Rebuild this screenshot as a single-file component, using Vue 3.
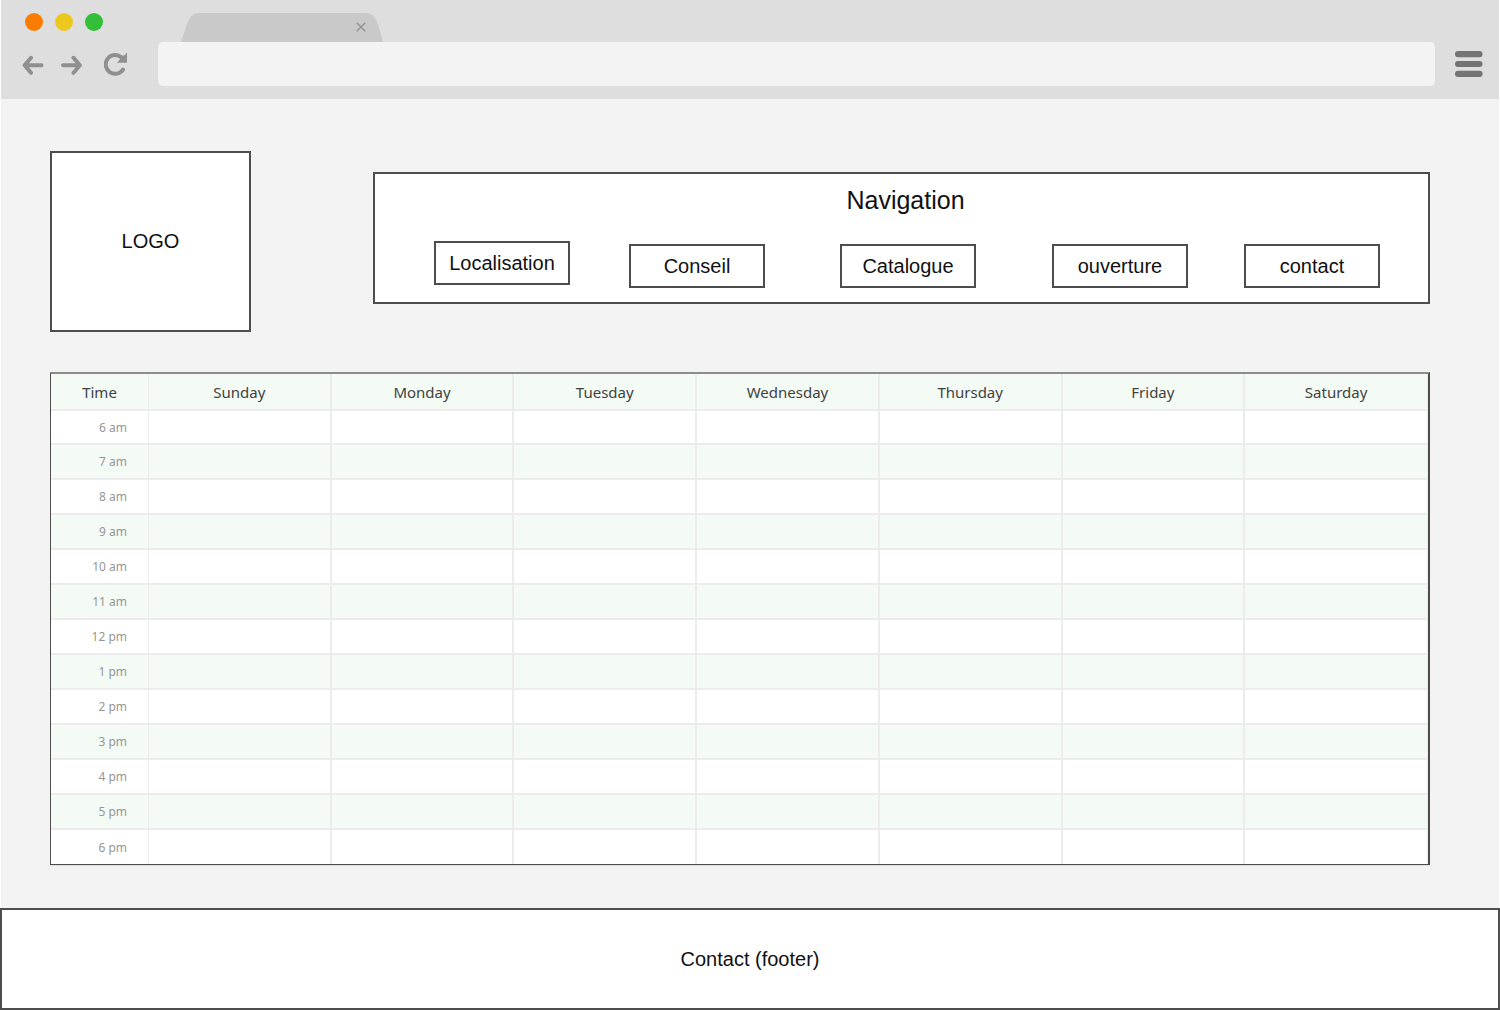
<script setup>
const links = ['Localisation', 'Conseil', 'Catalogue', 'ouverture', 'contact']
const days = ['Sunday', 'Monday', 'Tuesday', 'Wednesday', 'Thursday', 'Friday', 'Saturday']
const hours = [
  '6 am', '7 am', '8 am', '9 am', '10 am', '11 am', '12 pm',
  '1 pm', '2 pm', '3 pm', '4 pm', '5 pm', '6 pm',
]
</script>

<template>
  <div class="window">
    <div class="chrome">
      <div class="tabs">
        <div class="lights">
          <button class="light orange" type="button" aria-label="Close window"></button>
          <button class="light yellow" type="button" aria-label="Minimise window"></button>
          <button class="light green" type="button" aria-label="Maximise window"></button>
        </div>
        <div class="tab">
          <svg class="tab-shape" viewBox="0 0 202 29" preserveAspectRatio="none" aria-hidden="true">
            <path d="M0 29 L6 11 Q10 0 17 0 H185 Q193 0 197 11 L202 29 Z" fill="#c9c9c9" />
          </svg>
          <button class="icon tab-close" type="button" aria-label="Close tab">
            <svg width="10" height="10" viewBox="0 0 10 10">
              <path d="M0.7 0.7 L9.3 9.3 M9.3 0.7 L0.7 9.3" stroke="#949494" stroke-width="1.5" />
            </svg>
          </button>
        </div>
      </div>

      <div class="toolbar">
        <div class="history">
          <button class="icon" type="button" aria-label="Back">
            <svg width="22" height="22" viewBox="0 0 22 22" fill="none" stroke="#8f8f8f" stroke-width="4" stroke-linecap="round" stroke-linejoin="round">
              <path d="M19.5 12.3 H3.5 M9 4.8 L2.6 12.3 L9 19.8" />
            </svg>
          </button>
          <button class="icon" type="button" aria-label="Forward">
            <svg width="22" height="22" viewBox="0 0 22 22" fill="none" stroke="#8f8f8f" stroke-width="4" stroke-linecap="round" stroke-linejoin="round">
              <path d="M2 12.3 H18 M12.5 4.8 L18.9 12.3 L12.5 19.8" />
            </svg>
          </button>
        </div>
        <button class="icon" type="button" aria-label="Reload">
          <svg width="24" height="26" viewBox="0 0 24 26">
            <path d="M17.2 6.2 A9.4 9.4 0 1 0 19 18.6" fill="none" stroke="#8f8f8f" stroke-width="4" stroke-linecap="round" />
            <path d="M23 1.4 V11.8 H13 L16 8.2 L17.6 4.6 L20.3 4.4 Z" fill="#8f8f8f" />
          </svg>
        </button>
        <input class="address" type="text" aria-label="Address" />
        <button class="icon" type="button" aria-label="Menu">
          <svg width="28" height="26" viewBox="0 0 28 26" fill="#737373">
            <rect x="0" y="0" width="27.5" height="6.2" rx="3" />
            <rect x="0" y="9.9" width="27.5" height="6.2" rx="3" />
            <rect x="0" y="19.8" width="27.5" height="6.2" rx="3" />
          </svg>
        </button>
      </div>
    </div>

    <main class="page">
      <header class="top">
        <div class="logo">LOGO</div>
        <nav class="navigation" aria-labelledby="nav-title">
          <h2 id="nav-title">Navigation</h2>
          <div class="links">
            <a v-for="link in links" :key="link" href="#">{{ link }}</a>
          </div>
        </nav>
      </header>

      <table class="schedule">
        <thead>
          <tr>
            <th class="time" scope="col">Time</th>
            <th v-for="day in days" :key="day" scope="col">{{ day }}</th>
          </tr>
        </thead>
        <tbody>
          <tr v-for="hour in hours" :key="hour">
            <th scope="row">{{ hour }}</th>
            <td v-for="day in days" :key="day"></td>
          </tr>
        </tbody>
      </table>
    </main>

    <footer class="footer">Contact (footer)</footer>
  </div>
</template>

<style>
body {
  margin: 0;
  background: #fff;
}
</style>

<style scoped>
* {
  box-sizing: border-box;
}

.window {
  display: flex;
  flex-direction: column;
  min-height: 100vh;
  font-family: "Liberation Sans", Arial, sans-serif;
  font-size: 20px;
  color: #111;
}

button {
  border: 0;
  padding: 0;
}

svg {
  display: block;
}

.chrome {
  margin: 0 1px;
  padding-bottom: 13px;
  background: #dedede;
}

.tabs {
  display: flex;
  gap: 78px;
  height: 42px;
  padding: 13px 0 0 24px;
}

.lights {
  display: flex;
  gap: 12px;
}

.light {
  width: 18px;
  height: 18px;
  border-radius: 50%;
}

.orange { background: #fa7d00; }
.yellow { background: #ecc81f; }
.green { background: #33bf38; }

.tab {
  position: relative;
  display: flex;
  justify-content: flex-end;
  align-items: center;
  width: 202px;
  padding: 0 17px 2px 0;
}

.tab-shape {
  position: absolute;
  inset: 0;
  width: 100%;
  height: 100%;
}

.icon {
  flex: none;
  background: none;
}

.tab-close {
  position: relative;
}

.toolbar {
  display: flex;
  align-items: center;
  padding: 0 16px 0 21px;
}

.history {
  display: flex;
  gap: 17px;
  margin-right: 21px;
}

.address {
  flex: 1;
  min-width: 0;
  height: 44px;
  margin: 0 20px 0 30px;
  padding: 0 12px;
  border: 0;
  border-radius: 5px;
  background: #f3f3f3;
  font: inherit;
}

.page {
  flex: 1;
  margin: 0 1px;
  padding: 52px 69px 43px 49px;
  background: #f3f3f3;
}

.top {
  display: flex;
  align-items: center;
  gap: 122px;
  margin-bottom: 40px;
}

.logo,
.navigation,
.links a,
.footer {
  border: 2px solid #4d4d4d;
  background: #fff;
}

.logo {
  display: flex;
  flex: none;
  align-items: center;
  justify-content: center;
  width: 201px;
  height: 181px;
}

.navigation {
  flex: 1;
  height: 132px;
  margin-bottom: 7px;
}

.navigation h2 {
  margin: 0;
  padding: 11px 0 0 8px;
  font-size: 25px;
  font-weight: 400;
  line-height: 30px;
  text-align: center;
}

.links {
  display: grid;
  grid-template-columns: 195fr 211fr 212fr 192fr 136px;
  align-items: end;
  height: 47px;
  margin-top: 26px;
  padding: 0 48px 0 59px;
}

.links a {
  display: flex;
  align-items: center;
  justify-content: center;
  width: 136px;
  height: 44px;
  color: inherit;
  text-decoration: none;
}

.links a:first-child {
  align-self: start;
}

.schedule {
  width: 100%;
  table-layout: fixed;
  border: solid #4d4d4d;
  border-width: 2px 2px 1px 1px;
  border-top-color: #8c8c8c;
  border-spacing: 0;
  background: #fff;
  box-shadow: 0 1px #dedede;
  font-family: "Noto Sans", "Open Sans", sans-serif;
  font-size: 15px;
}

.schedule th,
.schedule td {
  height: 35px;
  padding: 0;
  border: solid #ececec;
  border-width: 0 2px 2px 0;
  font-weight: 400;
}

.schedule thead th {
  height: 37px;
  background: #f4faf4;
  color: #3f433f;
}

.schedule .time {
  width: 98px;
}

.schedule th:first-child {
  border-right-width: 1px;
}

.schedule th:last-child,
.schedule td:last-child {
  border-right-width: 1px;
}

.schedule tbody th {
  padding-right: 21px;
  color: #969696;
  font-size: 12px;
  text-align: right;
}

.schedule tbody tr:nth-child(even) {
  background: #f4faf4;
}

.schedule tbody tr:first-child > *,
.schedule tbody tr:last-child > * {
  height: 34px;
}

.schedule tbody tr:last-child > * {
  border-bottom: 0;
}

.footer {
  display: flex;
  align-items: center;
  justify-content: center;
  height: 102px;
}
</style>
